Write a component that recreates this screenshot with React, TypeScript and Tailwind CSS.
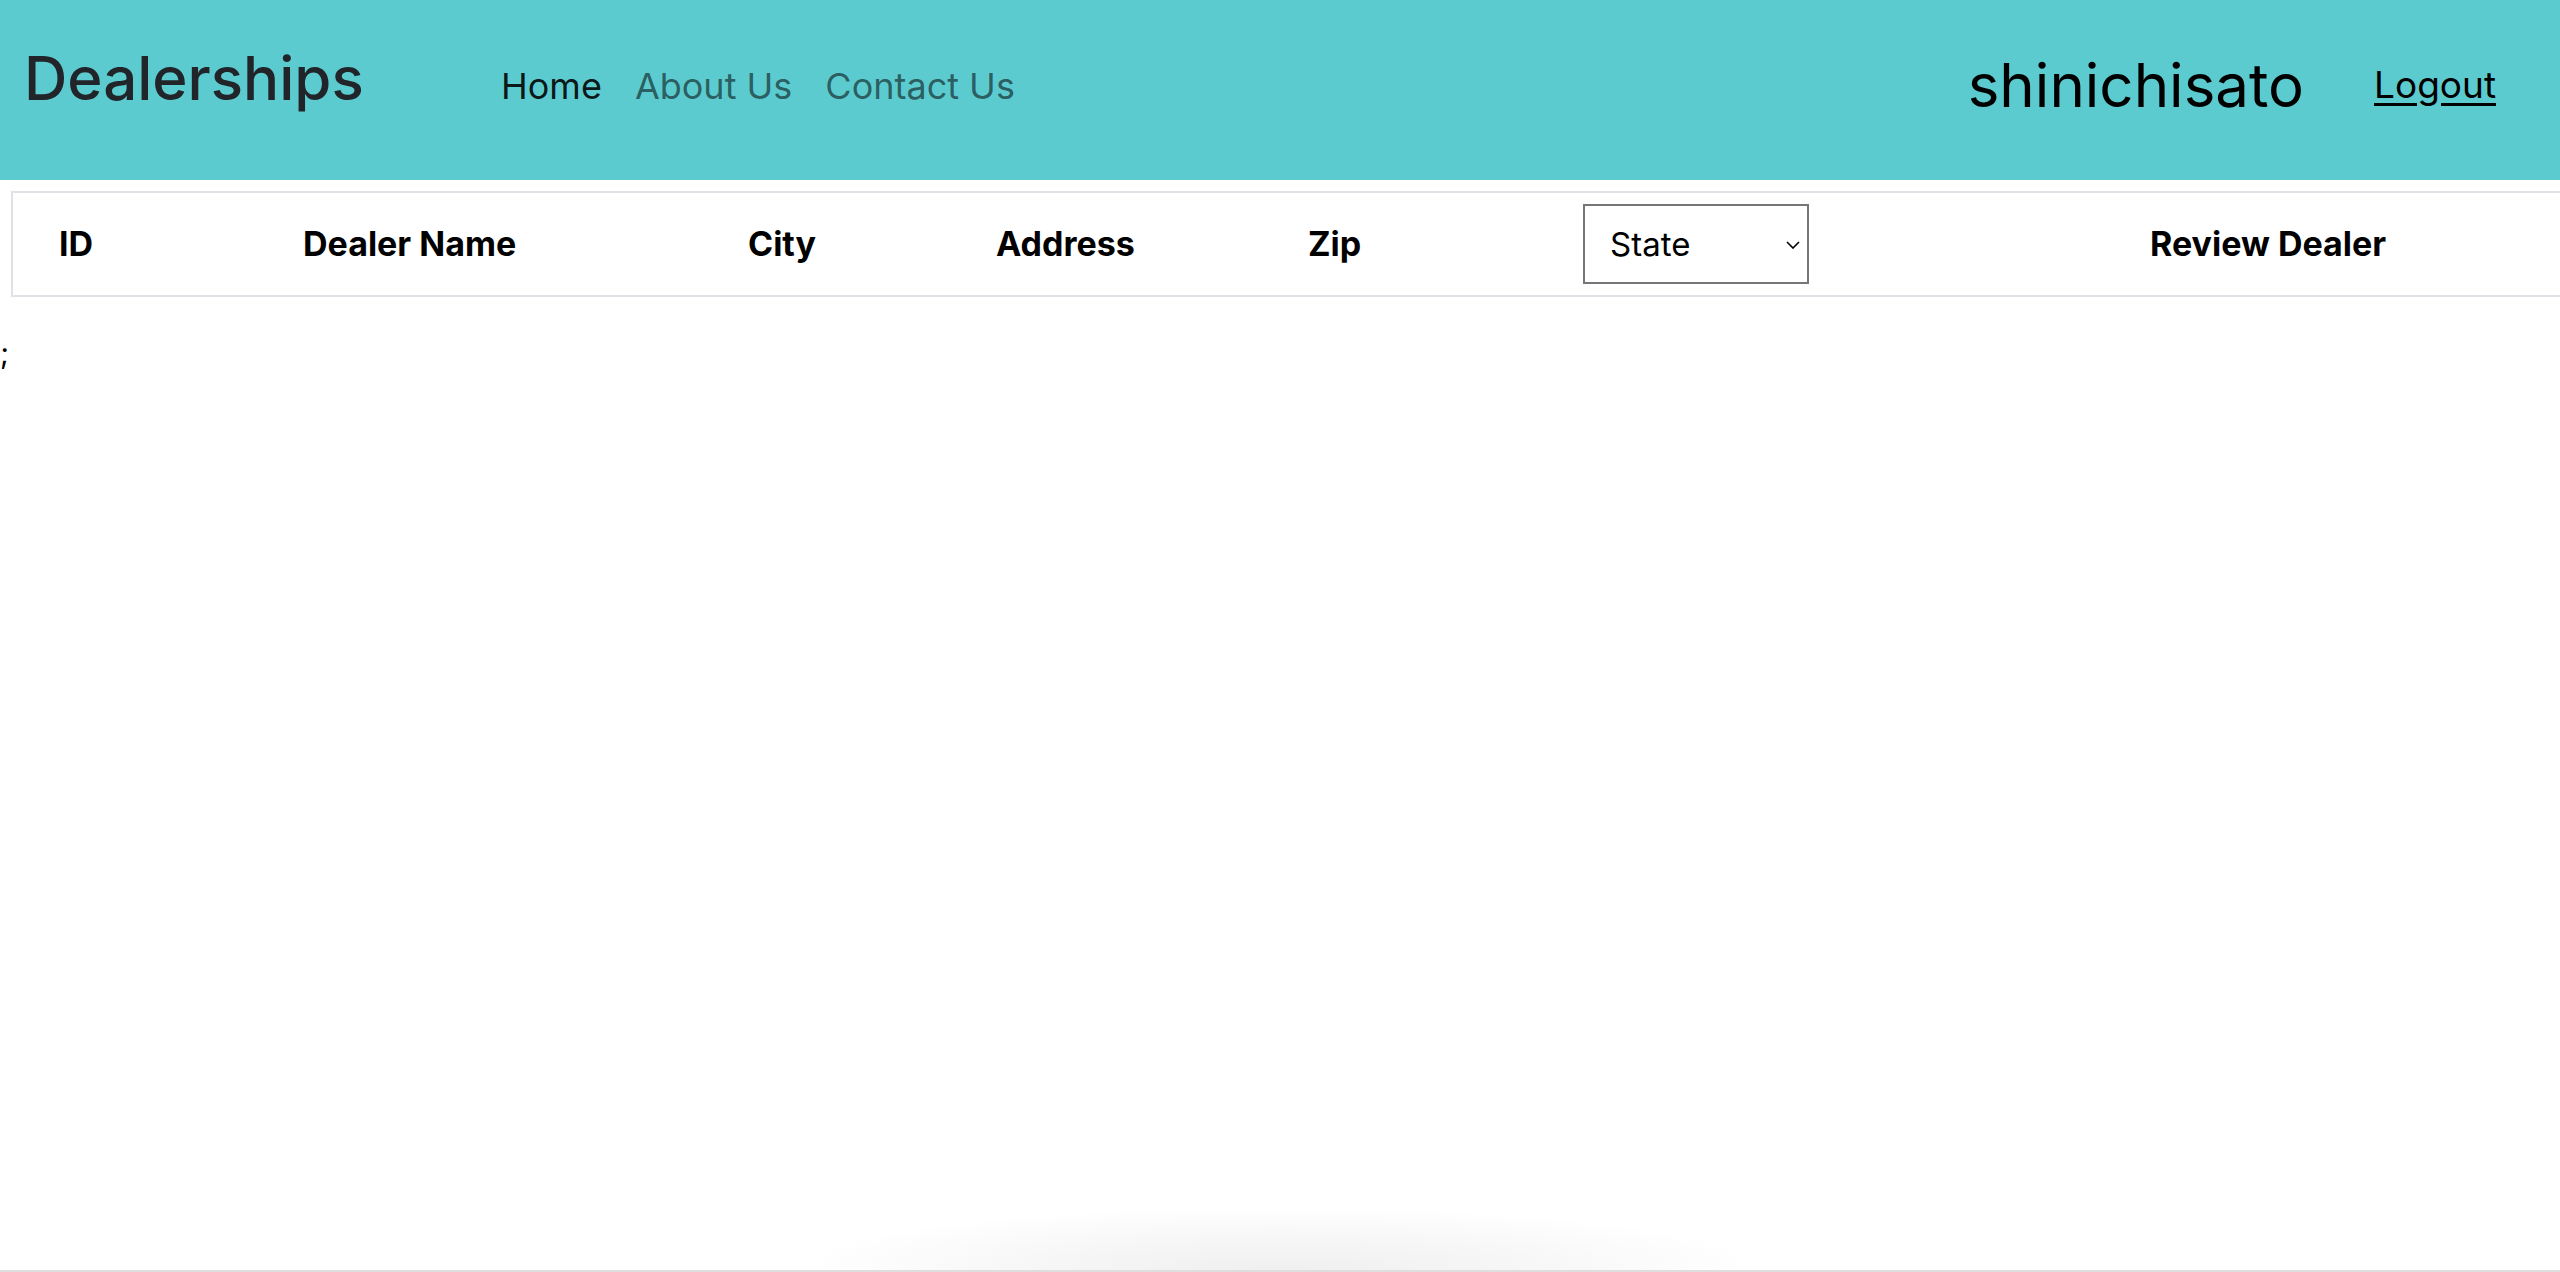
import { useState } from "react";

const columns = ["ID", "Dealer Name", "City", "Address", "Zip"];

export default function App() {
  const [state, setState] = useState("");

  return (
    <div
      className="h-screen overflow-hidden flex flex-col bg-white"
      style={{ fontFamily: "Inter, 'Noto Sans', sans-serif" }}
    >
      {/* Navbar */}
      <header className="h-[180px] shrink-0 flex items-start bg-[#5ccbcf]">
        <div className="w-[501px] pl-[24px] pt-[48px] text-[60px] font-medium leading-none text-[#212529]">
          Dealerships
        </div>
        <nav className="pt-[68px] flex gap-[33px] text-[36px] leading-none">
          <a href="#" className="text-black/90">
            Home
          </a>
          <a href="#" className="text-black/55">
            About Us
          </a>
          <a href="#" className="text-black/55">
            Contact Us
          </a>
        </nav>
        <div className="ml-auto flex items-start gap-[70px] pr-[64px]">
          <span className="pt-[55px] text-[60px] leading-none text-black">shinichisato</span>
          <a href="#" className="pt-[66px] text-[37px] leading-none text-black underline underline-offset-[5px]">
            Logout
          </a>
        </div>
      </header>

      {/* Table header */}
      <div className="mt-[11px] ml-[11px] h-[106px] shrink-0 border-l-2 border-y-2 border-[#dee2e6] grid grid-cols-[290px_445px_248px_312px_275px_567px_1fr] items-center text-[34px] font-bold leading-none text-black">
        {columns.map((c, i) => (
          <div key={c} className={i === 0 ? "pl-[46px]" : ""}>
            {c}
          </div>
        ))}
        <div className="relative w-[226px] h-[80px]">
          <select
            value={state}
            onChange={(e) => setState(e.target.value)}
            className="w-full h-full appearance-none rounded-none border-2 border-[#767676] bg-white pl-[25px] text-[33px] font-normal text-black outline-none"
          >
            <option value="">State</option>
            <option value="Kansas">Kansas</option>
            <option value="Texas">Texas</option>
          </select>
          <svg
            className="absolute right-[9px] top-[37px] pointer-events-none"
            width="14"
            height="8"
            viewBox="0 0 14 8"
            fill="none"
          >
            <path d="M1 1l6 6 6-6" stroke="#000" strokeWidth="1.6" />
          </svg>
        </div>
        <div>Review Dealer</div>
      </div>

      <div className="mt-[41px] text-[30px] leading-none text-black">;</div>

      <div className="flex-1" />
      <div className="h-[60px] w-[912px] mx-auto shrink-0 bg-[radial-gradient(ellipse_at_bottom,#efefef_0%,#f7f7f7_40%,#ffffff_75%)]" />
      <div className="h-[2px] shrink-0 bg-[#dedede]" />
    </div>
  );
}
